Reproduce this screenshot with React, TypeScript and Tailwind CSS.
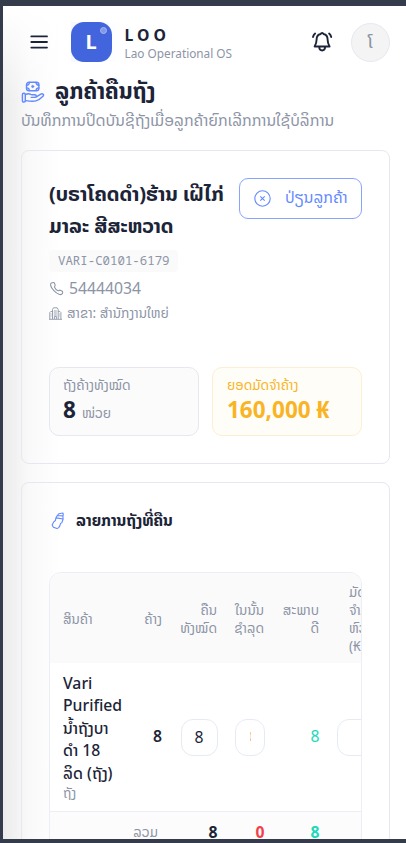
import React from 'react';

const HandMoney = () => (
  <svg className="h-6 w-6 shrink-0 text-[#6389ff]" viewBox="0 0 24 24" fill="none" stroke="currentColor" strokeWidth="1.4" strokeLinejoin="round" strokeLinecap="round">
    <rect x="5.500" y="2.200" width="12.400" height="8.600" rx="2.600" />
    <circle cx="11.700" cy="6.500" r="1.100" fill="currentColor" strokeWidth=".8" />
    <path d="M5.600 5.200c1.600.1 2.700-.9 2.700-2.800M17.800 5.200c-1.600.1-2.700-.9-2.700-2.800M5.600 7.900c1.600-.1 2.700.9 2.700 2.700M17.800 7.900c-1.600-.1-2.700.9-2.700 2.700" />
    <rect x="1.400" y="13.200" width="2.900" height="8.800" rx="1.200" />
    <path d="M4.500 14.700c1.800-1.100 3.600-1.100 5.300-.3l1.200.4h2.600c2.300 0 2.300 2.600 0 2.600h-3.400M14.900 17.200l4.900-3c2-1.200 3.600.6 2.200 2.100-2.100 2.200-4.600 3.900-7.100 4.600-3.200.9-6.800.3-10.300-.3" />
  </svg>
);

const Bell = () => (
  <svg className="h-6 w-6 text-[#1c2438]" viewBox="0 0 24 24" fill="none" stroke="currentColor" strokeWidth="1.900" strokeLinecap="round" strokeLinejoin="round">
    <path d="M10.700 4C7.700 4.500 6.600 7 6.600 9.600c0 2.800-.7 4.900-2 6.900h15c-1.300-2-2-4.100-2-6.900 0-2.600-1.300-5.100-4.100-5.600a1.500 1.500 0 0 0-2.800 0ZM9.200 17c.2 4.600 5.700 4.600 5.900 0M3 7c.3-1.500 1-2.600 2.100-3.500M21.200 7c-.3-1.500-1-2.600-2.100-3.500" />
  </svg>
);

const Phone = () => (
  <svg className="h-[15px] w-[15px] shrink-0" viewBox="0 0 15 15" fill="none" stroke="currentColor" strokeWidth="1.100" strokeLinejoin="round">
    <path d="M4.300 1.500 2.400 2C.8 2.800 1.300 6 4.900 9.600c3.600 3.700 7.300 5.200 8.500 2.900.5-1 .6-1.700-.1-2.200l-2.100-1.100c-.8-.3-1.400.7-2.100.5-1.400-.5-3.100-2.200-3.600-3.600-.2-.7.9-1.200.6-2L5.400 2c-.3-.5-.6-.6-1.100-.5Z" />
  </svg>
);

const Building = () => (
  <svg className="h-[13px] w-[13px] shrink-0" viewBox="0 0 13 13" fill="none" stroke="currentColor" strokeWidth=".9">
    <path d="M3.500 12V2.500l1-1.700h3.700l1 1.700V12M3.500 4.500H1.800L.8 5.500V12M9.200 4.500h1.700l1 1V12M0 12.300h13M5.400 12V9.500h2V12M4.800 4h3M4.800 6h3M4.800 8h3M1.800 7h.7M1.800 9h.7M10.200 7h.7M10.200 9h.7" />
  </svg>
);

const Bottle = () => (
  <svg className="h-[18px] w-[14px] shrink-0 text-[#6389ff]" viewBox="0 0 14 18" fill="none" stroke="currentColor" strokeWidth="1.100" strokeLinejoin="round">
    <path d="M7.800 1.800 12 1l.3 1.700-.4 1.100.2 3.400-1.100 3.100-1.500 1.300-.6 2-1.200 2-1.700 1-3.600-1.300L1.100 13l1.600-3.100 1.700-1.400.5-2.700 1.400-2.300ZM6.300 3.500l5.400.4M5.300 5.900l6.600 1.100" />
  </svg>
);

const cols = 'grid grid-cols-[85px_36px_56px_46px_56px_80px]';

export default function App() {
  return (
    <div className="h-[843px] w-[406px] overflow-hidden bg-[#343b4a] pt-[6px] pr-0 pb-1 pl-[3px] font-['Noto_Sans','Noto_Sans_Lao',sans-serif] text-[#8c94a6]">
      <div className="relative h-full overflow-hidden bg-white">
        <div className="absolute inset-y-0 left-0 w-[57px] bg-linear-to-r from-[#ebebeb] via-[#f9f9f9] via-45% to-white" />
        <div className="absolute top-0 left-0 h-24 w-[60px] bg-linear-to-b from-white to-transparent" />
        <div className="relative">
          <header className="flex h-[72px] items-center pr-4 pl-[27px]">
            <svg className="h-[18px] w-[18px] text-[#1c2438]" viewBox="0 0 18 18" stroke="currentColor" strokeWidth="1.800" strokeLinecap="round">
              <path d="M1.300 3.400h15.700M1.300 9h15.700M1.300 14.600h15.700" />
            </svg>
            <div className="ml-[22.500px] flex w-[54px] bg-linear-to-r from-[#f5f8ff] to-white">
              <div className="relative flex h-10 w-[41px] shrink-0 items-center justify-center rounded-[13px] bg-[#4264dc] text-[20px] font-bold text-white">
                L
                <span className="absolute top-[5px] right-[5px] h-[7px] w-[7px] rounded-full border border-[#a9b8f0] bg-[#8298e8]" />
              </div>
            </div>
            <div className="whitespace-nowrap">
              <div className="mt-[3px] text-[15.750px] leading-[18px] font-bold tracking-[4px] text-[#1c2438]">LOO</div>
              <div className="text-[11.800px] leading-[18px]">Lao Operational OS</div>
            </div>
            <div className="ml-auto flex items-center gap-[17px]">
              <Bell />
              <div className="flex h-[39px] w-[39px] items-center justify-center rounded-full border border-[#e6e8f2] bg-[#f4f4f4] pb-px text-[16px] font-medium">ໂ</div>
            </div>
          </header>
          <main className="pr-4 pl-[18px]">
            <div className="flex h-[28px] items-center gap-[10px]">
              <HandMoney />
              <h1 className="-mt-[2px] text-[22.300px] leading-7 font-bold whitespace-nowrap text-[#1c2438]">ລູກຄ້າຄືນຖັງ</h1>
            </div>
            <p className="h-[44px] text-[15.750px] leading-[28px] whitespace-nowrap">ບັນທຶກການປິດບັນຊີຖັງເມື່ອລູກຄ້າຍົກເລີກການໃຊ້ບໍລິການ</p>
            <section className="h-[314px] rounded-[8px] border border-[#e6e8ef] px-[27px] pt-[27px]">
              <div className="flex items-start justify-between">
                <h2 className="-mt-px mb-px text-[20.200px] leading-8 font-bold whitespace-nowrap text-[#1c2438]">(ບຣາໂຄດດຳ)ຮ້ານ ເຝີໄກ່<br />ມາລະ ສີສະຫວາດ</h2>
                <button className="flex h-[41px] w-[123px] shrink-0 items-center gap-[14px] rounded-[9px] border border-[#89a4ff] pl-[14px] text-[15.750px] whitespace-nowrap text-[#6389ff]">
                  <svg className="h-[17px] w-[17px] shrink-0" viewBox="0 0 17 17" fill="none" stroke="currentColor" strokeWidth="1.100"><circle cx="8.500" cy="8.500" r="7.700" /><path d="m6.300 6.300 4.400 4.400m0-4.400-4.400 4.400" /></svg>
                  <span className="pb-[2px]">ປ່ຽນລູກຄ້າ</span>
                </button>
              </div>
              <div className="mt-[8px] flex h-[22px] w-[129px] items-center rounded-[4px] bg-[#fafafa] pl-[9px] font-['Noto_Sans_Mono','DejaVu_Sans_Mono',monospace] text-[12.400px] whitespace-nowrap">VARI-C0101-6179</div>
              <div className="mt-[4px] flex h-[24px] items-center gap-[5px] text-[15.750px]"><Phone /><span className="pt-[2px]">54444034</span></div>
              <div className="mt-px flex h-[24px] items-center gap-[5px] text-[13.500px] whitespace-nowrap"><Building />ສາຂາ: ສຳນັກງານໃຫຍ່</div>
              <div className="mt-[42px] grid grid-cols-2 gap-[13px] whitespace-nowrap">
                <div className="h-[69px] rounded-[10px] border border-[#e6e8f0] bg-[#fbfbfb] px-[13px] pt-[7px]">
                  <div className="text-[13.500px] leading-[20px]">ຖັງຄ້າງທັງໝົດ</div>
                  <div className="text-[13.500px] leading-[30px]"><b className="mr-[6px] text-[22.500px] text-[#1c2438]">8</b>ໜ່ວຍ</div>
                </div>
                <div className="h-[69px] rounded-[10px] border border-[#fdeed3] bg-[#fffdf8] px-[14px] pt-[7px] text-[#f9b426]">
                  <div className="text-[13.500px] leading-[20px]">ຍອດມັດຈຳຄ້າງ</div>
                  <div className="text-[22.500px] leading-[30px] font-bold">160,000 ₭</div>
                </div>
              </div>
            </section>
            <section className="mt-[18px] h-[380px] rounded-[8px] border border-[#e6e8ef] px-[27px] pt-[26px]">
              <div className="flex h-[24px] items-center gap-[11px] pl-[2px]"><Bottle /><h3 className="text-[15.600px] font-bold whitespace-nowrap text-[#1c2438]">ລາຍການຖັງທີ່ຄືນ</h3></div>
              <div className="mt-[39px] h-[290px] overflow-hidden rounded-t-[12px] border border-[#ebeef5]">
                <div className={cols + " h-[90px] items-center bg-[#fafafa] pt-px text-right text-[13.500px] leading-[18px] whitespace-nowrap"}>
                  <div className="pl-[13px] text-left">ສິນຄ້າ</div>
                  <div className="pr-[9px]">ຄ້າງ</div>
                  <div className="pr-[10px]">ຄືນ<br />ທັງໝົດ</div>
                  <div className="pr-[9px]">ໃນນັ້ນ<br />ຊຳລຸດ</div>
                  <div className="pr-[10px]">ສະພາບ<br />ດີ</div>
                  <div className="pl-[20px] text-left">ມັດ<br />ຈຳ/<br />ຫົວ<br />(₭)</div>
                </div>
                <div className={cols + " h-[149px] items-center border-b border-[#ebeef5] bg-white text-right"}>
                  <div className="pt-px pl-[13px] text-left text-[15.750px] leading-[22.500px] font-medium whitespace-nowrap text-[#1c2438]">Vari<br />Purified<br />ນ້ຳຖັງບາ<br />ດຳ 18<br />ລິດ (ຖັງ)<div className="text-[13.500px] leading-[19px] font-normal text-[#8c94a6]">ຖັງ</div></div>
                  <div className="pr-[9px] text-[15.750px] font-semibold text-[#1c2438]">8</div>
                  <div className="mx-auto flex h-[37px] w-[37px] items-center justify-center rounded-[12px] border border-[#e6eaf3] pt-px text-[15.750px] text-[#1c2438]">8</div>
                  <div className="ml-[8px] flex h-[37px] w-[30px] items-center justify-center rounded-[12px] border border-[#e6eaf3]"><span className="flex w-px overflow-hidden text-[13px] text-[#f9b426]"><span className="-ml-px">0</span></span></div>
                  <div className="pr-[9.500px] text-[15.750px] text-[#20d9ba]">8</div>
                  <div className="ml-[8px] h-[37px] w-[60px] rounded-[12px] border border-[#e6eaf3]" />
                </div>
                <div className={cols + " h-[41px] items-center bg-[#fcfcfc] text-right text-[15.750px] font-bold"}>
                  <div className="col-span-2 pr-[13px] text-[13.500px] font-normal">ລວມ</div>
                  <div className="pr-[9.500px] text-[#1c2438]">8</div>
                  <div className="pr-[8.500px] text-[#f33f49]">0</div>
                  <div className="pr-[9.500px] text-[#20d9ba]">8</div>
                </div>
              </div>
            </section>
          </main>
        </div>
      </div>
    </div>
  );
}
